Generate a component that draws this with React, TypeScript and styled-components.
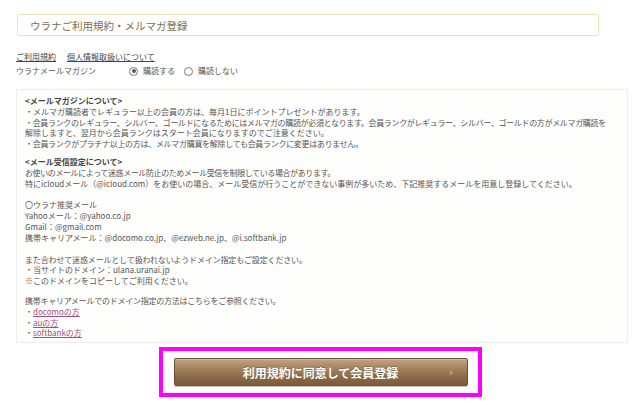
import React from "react";
import styled, { createGlobalStyle } from "styled-components";

const Global = createGlobalStyle`
  html, body { margin: 0; padding: 0; background: #ffffff; }
  body { font-family: "Noto Sans CJK JP", "Noto Sans", sans-serif; color: #555; }
`;

const Page = styled.div`
  width: 640px;
  height: 405px;
  box-sizing: border-box;
  padding: 14px 13px 0 16px;
  display: flex;
  flex-direction: column;
`;

const TitleBox = styled.div`
  margin-left: 1px;
  width: 582px;
  height: 22px;
  box-sizing: border-box;
  border: 1px solid #ece2b4;
  border-radius: 2px;
  display: flex;
  align-items: center;
  padding-left: 12px;
  font-size: 10.5px;
  color: #806c52;
`;

const LinkRow = styled.div`
  margin-top: 15px;
  display: flex;
  gap: 11px;
  font-size: 8px;
  line-height: 12px;
`;

const TopLink = styled.a`
  color: #444;
  text-decoration: underline;
  cursor: pointer;
`;

const RadioRow = styled.div`
  display: flex;
  align-items: center;
  font-size: 8px;
  line-height: 12px;
  color: #555;
  margin-top: 2px;
`;

const RadioLabelText = styled.span`
  width: 113px;
`;

const RadioOption = styled.label`
  display: flex;
  align-items: center;
  gap: 5px;
  margin-right: 9px;
`;

const RadioDot = styled.span<{ $checked?: boolean }>`
  width: 9px;
  height: 9px;
  box-sizing: border-box;
  border-radius: 50%;
  border: 1px solid #777;
  background: #fff;
  display: inline-flex;
  align-items: center;
  justify-content: center;
  &::after {
    content: "";
    width: 4px;
    height: 4px;
    border-radius: 50%;
    background: ${(p) => (p.$checked ? "#555" : "transparent")};
  }
`;

const InfoBox = styled.div`
  margin-top: 12px;
  width: 612px;
  height: 254px;
  box-sizing: border-box;
  border: 1px solid #ededea;
  background: #fefefd;
  padding: 6px 8px 0 8px;
  font-size: 8px;
  line-height: 10.8px;
  color: #555;
`;

const Block = styled.div<{ $gap?: number }>`
  margin-top: ${(p) => p.$gap ?? 0}px;
`;

const Line = styled.div<{ $bold?: boolean; $ls?: number }>`
  white-space: nowrap;
  letter-spacing: ${(p) => p.$ls ?? 0}px;
  font-weight: ${(p) => (p.$bold ? 700 : 400)};
  color: ${(p) => (p.$bold ? "#444" : "#555")};
`;

const BoxLink = styled.a`
  color: #a0507e;
  text-decoration: underline;
  cursor: pointer;
`;

const ButtonArea = styled.div`
  display: flex;
  justify-content: center;
  margin-top: 4px;
  padding-right: 3px;
`;

const Highlight = styled.div`
  border: 4px solid #ff00ff;
  padding: 7px 10px 7px 11px;
  width: 323px;
  box-sizing: border-box;
`;

const SubmitButton = styled.button`
  position: relative;
  width: 294px;
  height: 28px;
  border: 1px solid #6e5034;
  border-radius: 2px;
  background: linear-gradient(to bottom, #c2a585 0%, #a4845f 35%, #8a6a47 70%, #7a5b3b 100%);
  box-shadow: 0 1px 1px rgba(0, 0, 0, 0.25), inset 0 1px 0 rgba(255, 255, 255, 0.25);
  color: #fff;
  font-family: "Noto Sans CJK JP", sans-serif;
  font-size: 12px;
  font-weight: 700;
  display: flex;
  align-items: center;
  justify-content: center;
  padding: 0;
  cursor: pointer;
  text-shadow: 0 -1px 0 rgba(0, 0, 0, 0.2);
`;

const Chevron = styled.span`
  position: absolute;
  right: 14px;
  top: 50%;
  transform: translateY(-55%);
  font-size: 11px;
  font-weight: 400;
  color: #eadccb;
`;

export default function App() {
  return (
    <>
      <Global />
      <Page>
        <TitleBox>ウラナご利用規約・メルマガ登録</TitleBox>
        <LinkRow>
          <TopLink>ご利用規約</TopLink>
          <TopLink>個人情報取扱いについて</TopLink>
        </LinkRow>
        <RadioRow>
          <RadioLabelText>ウラナメールマガジン</RadioLabelText>
          <RadioOption>
            <RadioDot $checked />
            購読する
          </RadioOption>
          <RadioOption>
            <RadioDot />
            購読しない
          </RadioOption>
        </RadioRow>
        <InfoBox>
          <Block>
            <Line $bold>&lt;メールマガジンについて&gt;</Line>
            <Line>・メルマガ購読者でレギュラー以上の会員の方は、毎月1日にポイントプレゼントがあります。</Line>
            <Line $ls={-0.34}>・会員ランクのレギュラー、シルバー、ゴールドになるためにはメルマガの購読が必須となります。会員ランクがレギュラー、シルバー、ゴールドの方がメルマガ購読を</Line>
            <Line>解除しますと、翌月から会員ランクはスタート会員になりますのでご注意ください。</Line>
            <Line $ls={-0.3}>・会員ランクがプラチナ以上の方は、メルマガ購買を解除しても会員ランクに変更はありません。</Line>
          </Block>
          <Block $gap={7}>
            <Line $bold>&lt;メール受信設定について&gt;</Line>
            <Line $ls={-0.4}>お使いのメールによって迷惑メール防止のためメール受信を制限している場合があります。</Line>
            <Line>特にicloudメール（@icloud.com）をお使いの場合、メール受信が行うことができない事例が多いため、下記推奨するメールを用意し登録してください。</Line>
          </Block>
          <Block $gap={11}>
            <Line>〇ウラナ推奨メール</Line>
            <Line>Yahooメール：@yahoo.co.jp</Line>
            <Line>Gmail：@gmail.com</Line>
            <Line>携帯キャリアメール：@docomo.co.jp、@ezweb.ne.jp、@i.softbank.jp</Line>
          </Block>
          <Block $gap={11}>
            <Line $ls={-0.15}>また合わせて迷惑メールとして扱われないようドメイン指定もご設定ください。</Line>
            <Line>・当サイトのドメイン：ulana.uranai.jp</Line>
            <Line>※このドメインをコピーしてご利用ください。</Line>
          </Block>
          <Block $gap={9}>
            <Line $ls={-0.25}>携帯キャリアメールでのドメイン指定の方法はこちらをご参照ください。</Line>
            <Line>・<BoxLink>docomoの方</BoxLink></Line>
            <Line>・<BoxLink>auの方</BoxLink></Line>
            <Line>・<BoxLink>softbankの方</BoxLink></Line>
          </Block>
        </InfoBox>
        <ButtonArea>
          <Highlight>
            <SubmitButton type="button">
              利用規約に同意して会員登録
              <Chevron>›</Chevron>
            </SubmitButton>
          </Highlight>
        </ButtonArea>
      </Page>
    </>
  );
}
